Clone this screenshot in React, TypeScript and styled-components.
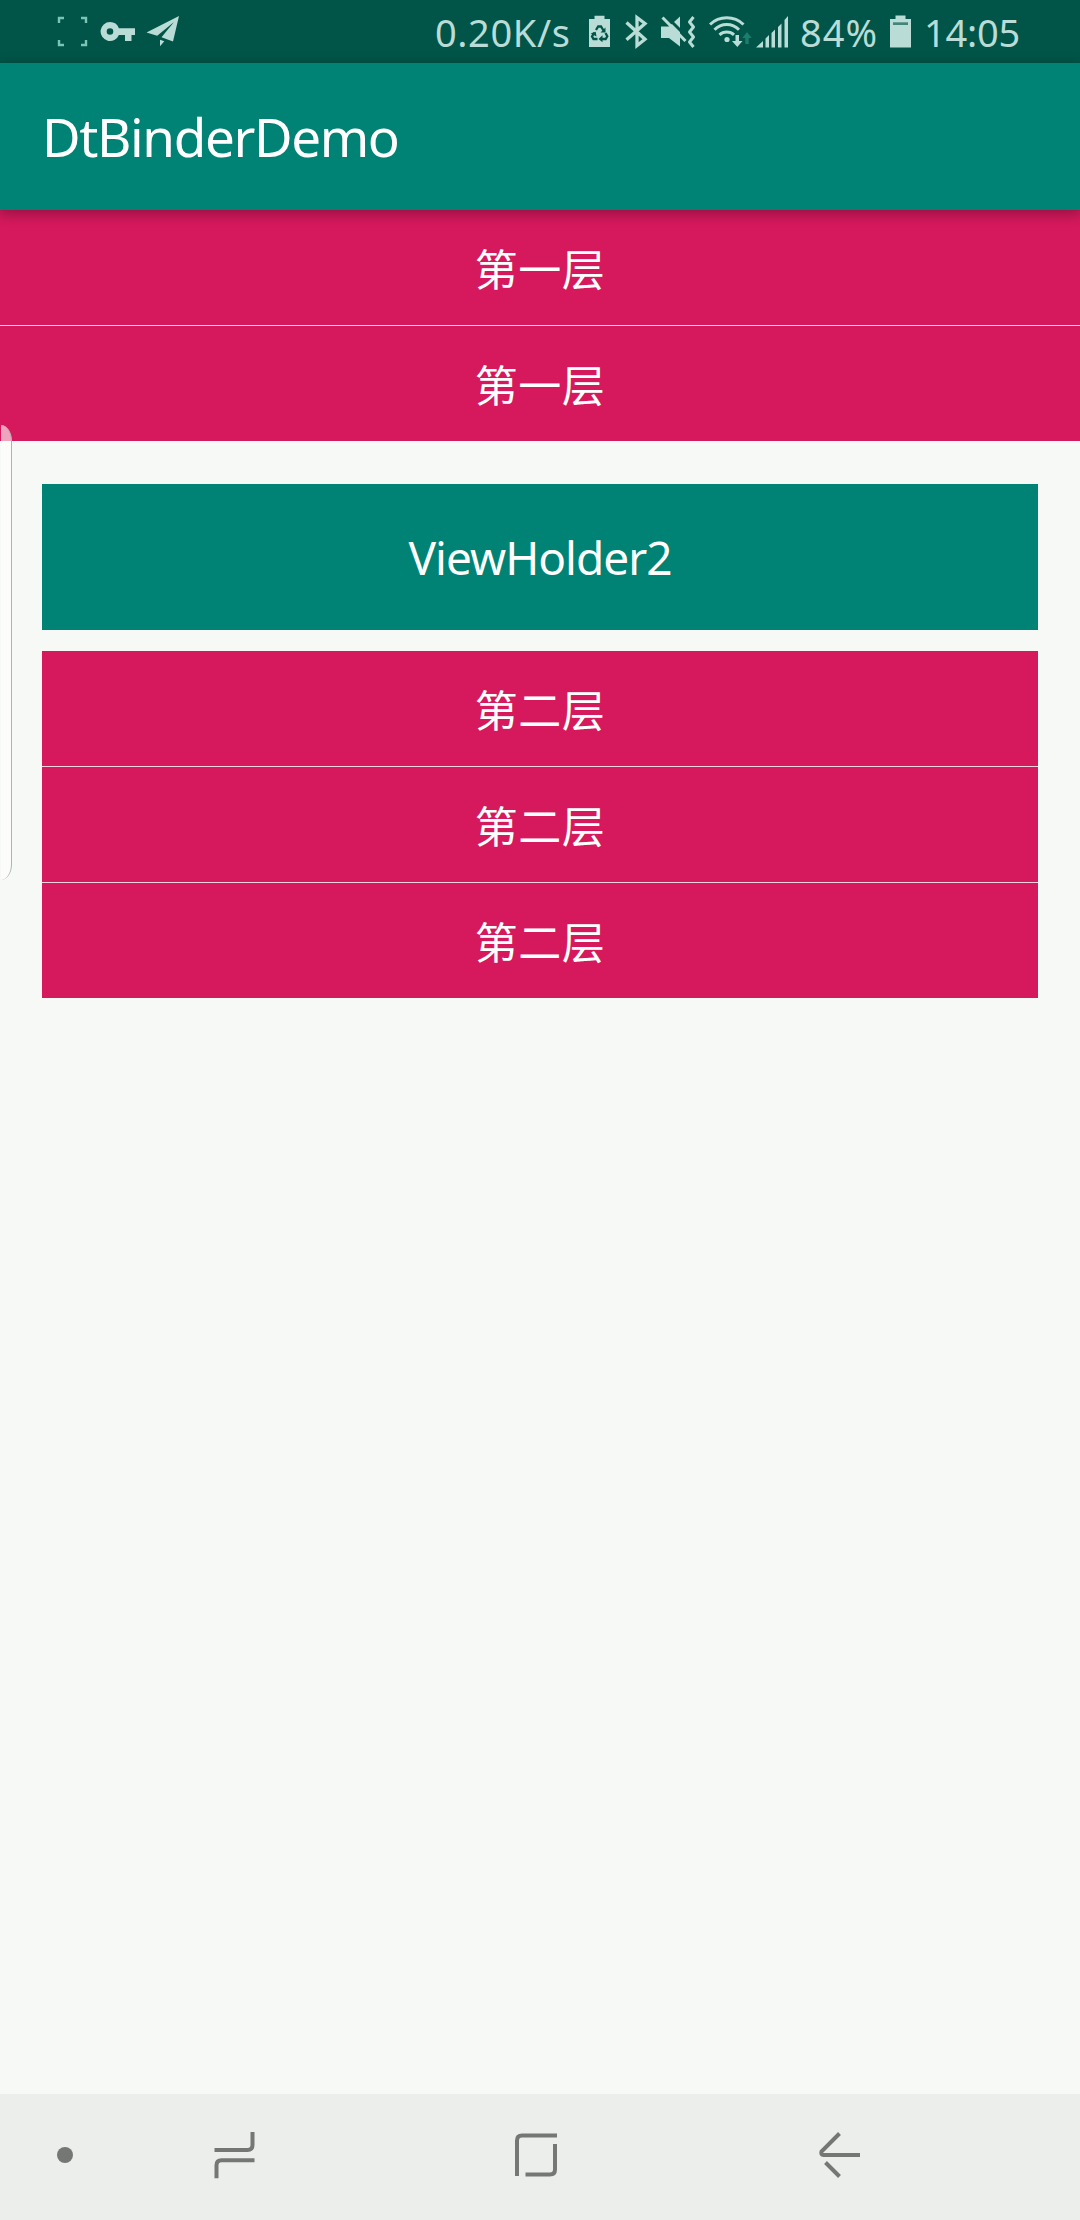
import React from "react";
import styled, { createGlobalStyle } from "styled-components";

const GlobalStyle = createGlobalStyle`
  body { margin: 0; background: #f7f9f6; }
  * { box-sizing: border-box; }
`;

const Screen = styled.div`
  position: relative;
  display: flex;
  flex-direction: column;
  width: 1080px;
  height: 2220px;
  overflow: hidden;
  background: #f7f9f6;
  color: #fff;
  font-family: "Noto Sans", "Noto Sans CJK SC", sans-serif;
`;

const StatusBar = styled.header`
  display: flex;
  justify-content: space-between;
  height: 63px;
  padding: 0 61px 0 57px;
  background: #005548;
  color: #b9dcd6;
`;

const StatusGroup = styled.div`
  display: flex;
  align-items: center;
`;

const StatusText = styled.span<{ $width: number; $spacing?: number }>`
  width: ${(p) => p.$width}px;
  padding-top: 1px;
  font-size: 38px;
  line-height: 62px;
  letter-spacing: ${(p) => p.$spacing ?? 0}px;
  white-space: nowrap;
`;

const Glyph = styled.svg<{ $gap?: number }>`
  display: block;
  flex: none;
  margin-left: ${(p) => p.$gap ?? 0}px;
`;

const AppBar = styled.div`
  position: relative;
  z-index: 1;
  display: flex;
  align-items: center;
  height: 147px;
  padding: 0 42px;
  background: #008374;
  box-shadow: 0 3px 12px 1px rgba(0, 0, 0, 0.3);
`;

const Title = styled.h1`
  margin: 0;
  font-size: 53px;
  font-weight: 400;
  line-height: 76px;
  letter-spacing: -1.4px;
`;

const Content = styled.main`
  flex: 1;
`;

const List = styled.div`
  display: flex;
  flex-direction: column;
  gap: 1px;
  background: #f9d3e0;
`;

const Row = styled.div`
  display: flex;
  align-items: center;
  justify-content: center;
  height: 115px;
  padding-bottom: 2px;
  background: #d5195c;
  font-family: "Noto Sans CJK SC", sans-serif;
  font-size: 43px;
  line-height: 62px;
  letter-spacing: 0.5px;
`;

const Nested = styled.section`
  display: flex;
  flex-direction: column;
  gap: 21px;
  padding: 43px 42px 0;
`;

const Holder = styled.div`
  display: flex;
  align-items: center;
  justify-content: center;
  height: 146px;
  background: #008374;
  font-size: 46px;
  letter-spacing: -1px;
`;

const EdgeHandle = styled.div`
  position: absolute;
  left: 1px;
  top: 425px;
  width: 11px;
  height: 455px;
  border-right: 1.5px solid #b1b3b0;
  border-radius: 0 11px 11px 0 / 0 16px 16px 0;
  background: rgba(255, 255, 255, 0.6);
  z-index: 2;
`;

const NavBar = styled.nav`
  display: flex;
  align-items: center;
  height: 126px;
  padding-left: 57px;
  background: #eceeeb;
  color: #757774;
`;

const App = () => (
  <Screen>
    <GlobalStyle />
    <StatusBar>
      <StatusGroup>
        <Glyph width={32} height={63} viewBox="57 0 32 63" fill="none" stroke="#7cc4b6" strokeWidth={2.4}>
          <path d="M59 23v-5h5M81 18h5v5M86 40v5h-5M64 45h-5v-5" />
        </Glyph>
        <Glyph $gap={11} width={36} height={63} viewBox="100 0 36 63" fill="currentColor" fillRule="evenodd">
          <path d="M110 22a9.500 9.500 0 0 1 8.900 6.200H135V35h-3.500v6H125v-6h-6.100A9.500 9.500 0 1 1 110 22zm0 6.200a3.300 3.300 0 1 0 0 6.600 3.300 3.300 0 0 0 0-6.600z" />
        </Glyph>
        <Glyph $gap={9} width={36} height={63} viewBox="145 0 36 63" fill="currentColor">
          <path d="M179 16l-6 25.500-11.500-4.200L174 22l-16.800 13.800L146.500 32.500zM160 39.700l4.300 1.500-4.300 5z" />
        </Glyph>
      </StatusGroup>
      <StatusGroup>
        <StatusText $width={154} $spacing={0.6}>0.20K/s</StatusText>
        <Glyph width={22} height={63} viewBox="589 0 22 63">
          <path fill="currentColor" d="M594.500 19v-3.300h10V19h5.500v28h-21V19z" />
          <g fill="none" stroke="#005548" strokeWidth={2.300}>
            <path d="M596 30l2.200-3.500h2.800l2.500 4M605.500 33l1.800 3.200-1.600 2.800h-4.500M597.500 39h-4l-1.500-2.600 2.200-3.800" />
          </g>
          <path fill="#005548" d="M605.500 27.500v5h-5zM602.500 35.300v7l-4-3.400zM590.700 33.400l5-1.600.8 4.600z" />
        </Glyph>
        <Glyph $gap={14} width={23} height={63} viewBox="625 0 23 63" fill="none" stroke="currentColor" strokeWidth={3.3}>
          <path d="M626.500 22.500l18.500 16.700-8 6.300v-28l8 6-18.500 16.200" />
        </Glyph>
        <Glyph $gap={12} width={36} height={63} viewBox="660 0 36 63">
          <path fill="currentColor" d="M661 26.500h8l11-10v30l-11-8.500h-8z" />
          <path stroke="#005548" strokeWidth={3} d="M666 16l21 21" />
          <path stroke="currentColor" strokeWidth={3} d="M662.500 17.500l23 23.500" />
          <path fill="none" stroke="currentColor" strokeWidth={3} strokeLinejoin="round" d="M693.500 17l-4 5 4 5-4 5 4 5-4 5 4 5" />
        </Glyph>
        <Glyph $gap={13} width={43} height={63} viewBox="709 0 43 63" fill="none" stroke="currentColor" strokeWidth={3}>
          <path d="M710 24.500a24 24 0 0 1 33.500 0M714.500 29.800a17 17 0 0 1 24.500 0M719.500 34.800a10.500 10.500 0 0 1 14.500 0" />
          <circle cx={727} cy={39.500} r={2.600} fill="currentColor" stroke="none" />
          <path fill="currentColor" stroke="none" d="M735.500 35h3.500v6h3.500l-5.200 6-5.300-6h3.500z" />
          <path fill="#1c7d6e" stroke="none" d="M745.300 44v-6h-3l4.700-6 4.700 6h-3v6z" />
        </Glyph>
        <Glyph $gap={4} width={33} height={63} viewBox="756 0 33 63" fill="currentColor">
          <path d="M756 47.500l7-6.500v6.500zM765.500 38.500l3.500-3.500v12.500h-3.500zM771.500 33l3.500-3.500v18h-3.500zM778 27l3.500-3.500v24H778zM784.500 20l3.500-4v31.500h-3.500z" />
        </Glyph>
        <Glyph width={11} height={63} />
        <StatusText $width={90} $spacing={1}>84%</StatusText>
        <Glyph width={22} height={63} viewBox="890 0 22 63">
          <path fill="currentColor" d="M895.500 19v-3.500h10V19h5.500v28.500h-21V19z" />
          <path fill="#438579" d="M893 22.300h15v2.700h-15z" />
        </Glyph>
        <Glyph width={12} height={63} />
        <StatusText $width={95} $spacing={-0.2}>14:05</StatusText>
      </StatusGroup>
    </StatusBar>
    <AppBar>
      <Title>DtBinderDemo</Title>
    </AppBar>
    <Content>
      <List>
        <Row>第一层</Row>
        <Row>第一层</Row>
      </List>
      <Nested>
        <Holder>ViewHolder2</Holder>
        <List>
          <Row>第二层</Row>
          <Row>第二层</Row>
          <Row>第二层</Row>
        </List>
      </Nested>
    </Content>
    <NavBar>
      <Glyph width={16} height={126} viewBox="57 2094 16 126" fill="currentColor">
        <circle cx={65} cy={2155} r={8} />
      </Glyph>
      <Glyph $gap={140} width={44} height={126} viewBox="213 2094 44 126" fill="none" stroke="currentColor" strokeWidth={4}>
        <path d="M214.500 2150h33q5 0 5-5v-13M254.500 2160.200h-33q-5 0-5 5v13" />
      </Glyph>
      <Glyph $gap={257} width={44} height={126} viewBox="514 2094 44 126" fill="none" stroke="currentColor" strokeWidth={4}>
        <path d="M517 2176v-35.500q0-5 5-5h35M555 2144v25.500q0 5-5 5h-24.500" />
      </Glyph>
      <Glyph $gap={260} width={44} height={126} viewBox="818 2094 44 126" fill="none" stroke="currentColor" strokeWidth={4}>
        <path d="M839.500 2133.500l-18 18q-1 3.500 2 3.500H860M825.500 2162.500l14 14" />
      </Glyph>
    </NavBar>
    <EdgeHandle />
  </Screen>
);

export default App;
